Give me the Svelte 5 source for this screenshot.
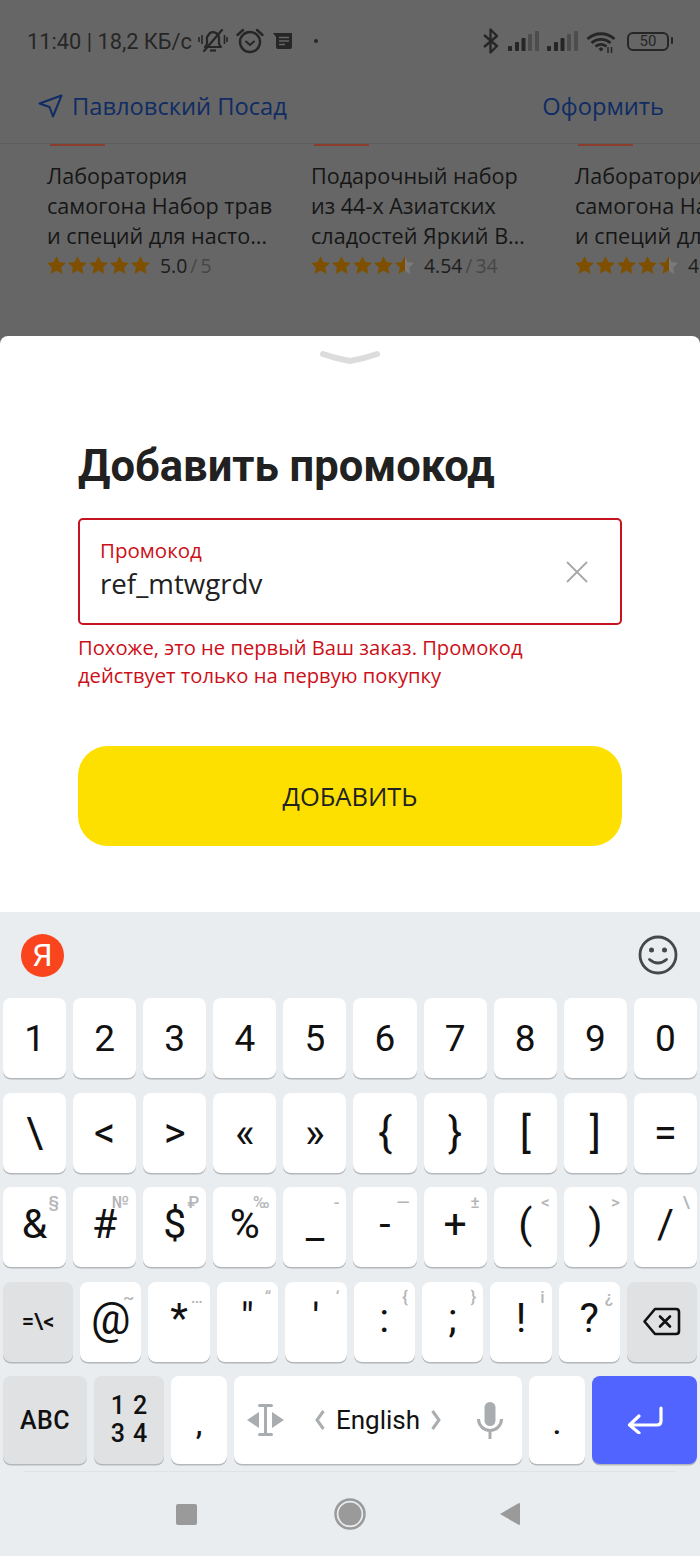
<script lang="ts">
  const cards = [
    { lines: 'Лаборатория самогона Набор трав и специй для насто…', rating: 5, score: '5.0', count: '5' },
    { lines: 'Подарочный набор из 44-х Азиатских сладостей Яркий В…', rating: 4.54, score: '4.54', count: '34' },
    { lines: 'Лаборатория самогона Набор трав и специй для насто…', rating: 4.54, score: '4.54', count: '34' }
  ];

  const starPath = 'M9.5 0.2l2.9 5.9 6.500.8-4.800 4.500 1.400 6.500-6-3.300-6 3.300 1.400-6.500L.1 6.900l6.500-.8z';

  const starFill = (rating: number, i: number) => Math.max(0, Math.min(1, rating - i)) * 100;

  const numberRow = ['1', '2', '3', '4', '5', '6', '7', '8', '9', '0'];
  const bracketRow = ['\\', '<', '>', '«', '»', '{', '}', '[', ']', '='];
  const symbolRow = [
    ['&', '§'], ['#', '№'], ['$', '₽'], ['%', '‰'], ['_', '-'],
    ['-', '—'], ['+', '±'], ['(', '<'], [')', '>'], ['/', '\\']
  ];
  const punctRow = [
    ['@', '~'], ['*', '…'], ['"', '“'], ["'", '‘'], [':', '{'], [';', '}'], ['!', 'i'], ['?', '¿']
  ];
</script>

<div class="page">
  <div class="backdrop">
    <div class="status">
      <span class="clock">11:40 | 18,2 КБ/с</span>
      <svg class="ic-bell" width="30" height="26" viewBox="0 0 30 26" fill="none" stroke="#262626">
        <path d="M7 19h16l-2-3v-6a6 6 0 0 0-9-5L9 9v7z" stroke-width="2.2" stroke-linejoin="round" />
        <path d="M12 22.5h6" stroke-width="2.2" />
        <path d="M6 23L24 2" stroke-width="2.2" stroke-linecap="round" />
        <path d="M1 9v5M4 7v9M26.500 7v9M29 9v5" stroke-width="1.6" />
      </svg>
      <svg class="ic-alarm" width="28" height="28" viewBox="0 0 28 28" fill="none" stroke="#262626" stroke-width="2.4">
        <circle cx="14" cy="15" r="10" />
        <path d="M1.500 8L7 3M26.500 8L21 3" stroke-linecap="round" />
        <path d="M10 14.500l4 3.500 4-3.500" stroke-linecap="round" stroke-width="2" />
      </svg>
      <svg class="ic-note" width="20" height="16" viewBox="0 0 20 16">
        <path d="M0 0h19v14q0 2-2 2H5q-2 0-2-2V4z" fill="#262626" />
        <path d="M6 4.500h10M6 8h10M6 11.500h6" stroke="#666" stroke-width="1.600" />
      </svg>
      <span class="dot"></span>
      <span class="spacer"></span>
      <svg class="ic-bt" width="16" height="26" viewBox="0 0 16 26" fill="none" stroke="#262626" stroke-width="2.300" stroke-linejoin="round">
        <path d="M1 7l13 11-6.500 6.500V1.500L14 8 1 19" />
      </svg>
      {#each [0, 1] as n (n)}
        <svg class="ic-signal" width="31" height="20" viewBox="0 0 31 20">
          <rect x="0" y="15" width="4" height="5" rx="1" fill="#262626" />
          <rect x="7" y="11" width="4" height="9" rx="1" fill="#262626" />
          <rect x="13.500" y="7" width="4" height="13" rx="1" fill="#262626" />
          <rect x="20" y="3" width="4" height="17" rx="1" fill="#4d4d4d" />
          <rect x="27" y="0" width="4" height="20" rx="1" fill="#4d4d4d" />
        </svg>
      {/each}
      <svg class="ic-wifi" width="31" height="23" viewBox="0 0 31 23" fill="none" stroke="#262626" stroke-width="2.800">
        <path d="M1.500 9a20 20 0 0 1 27 0M5.500 13a14 14 0 0 1 19 0M9.500 16.500a8 8 0 0 1 11 0" />
        <path d="M12.500 19l2.500-2 2.500 2-2.500 2.500z" fill="#262626" stroke="none" />
        <path d="M22 17v6M25.500 17v6" stroke-width="1.500" />
      </svg>
      <div class="battery"><span>50</span></div>
    </div>

    <div class="topbar">
      <svg class="ic-plane" width="25" height="24" viewBox="0 0 25 24" fill="none" stroke="#0f2c64" stroke-width="2" stroke-linejoin="round">
        <path d="M1.500 9.500L23.500 1.500 15 22.500 11.500 13z" />
      </svg>
      <span class="link">Павловский Посад</span>
      <span class="link checkout">Оформить</span>
    </div>

    <div class="cards">
      {#each cards as card, c (c)}
        <div class="card">
          <div class="accent"></div>
          <div class="title">{card.lines}</div>
          <div class="rating">
            <div class="stars">
              {#each [0, 1, 2, 3, 4] as i (i)}
                <svg width="19" height="18" viewBox="0 0 19 18">
                  <defs>
                    <linearGradient id="g{c}{i}">
                      <stop offset="{starFill(card.rating, i)}%" stop-color="#7f4f00" />
                      <stop offset="{starFill(card.rating, i)}%" stop-color="#7a7a7a" />
                    </linearGradient>
                  </defs>
                  <path d={starPath} fill="url(#g{c}{i})" />
                </svg>
              {/each}
            </div>
            <span class="score">{card.score}</span><span class="count"><i>/</i>{card.count}</span>
          </div>
        </div>
      {/each}
    </div>
  </div>

  <div class="sheet">
    <svg class="handle" width="62" height="16" viewBox="0 0 62 16" fill="none">
      <path d="M4 4Q18 9 31 11Q44 9 58 4" stroke="#dcdcdc" stroke-width="6" stroke-linecap="round" />
    </svg>
    <h1>Добавить промокод</h1>
    <div class="field">
      <div class="field-text">
        <div class="field-label">Промокод</div>
        <div class="field-value">ref_mtwgrdv</div>
      </div>
      <svg width="22" height="22" viewBox="0 0 22 22" stroke="#a8a8a8" stroke-width="1.800">
        <path d="M1 1l20 20M21 1L1 21" />
      </svg>
    </div>
    <p class="error">Похоже, это не первый Ваш заказ. Промокод<br />действует только на первую покупку</p>
    <button class="submit">ДОБАВИТЬ</button>
  </div>

  <div class="keyboard">
    <div class="toolbar">
      <div class="ya">Я</div>
      <svg width="40" height="40" viewBox="0 0 40 40" fill="none" stroke="#45484b" stroke-width="2.800">
        <circle cx="20" cy="20" r="18" />
        <path d="M11.500 24.500q8.500 7 17 0" stroke-linecap="round" />
        <circle cx="13.500" cy="15" r="2.500" fill="#45484b" stroke="none" />
        <circle cx="26.500" cy="15" r="2.500" fill="#45484b" stroke="none" />
      </svg>
    </div>

    <div class="rows">
      <div class="row">
        {#each numberRow as k (k)}<div class="key">{k}</div>{/each}
      </div>
      <div class="row">
        {#each bracketRow as k (k)}<div class="key tall">{k}</div>{/each}
      </div>
      <div class="row">
        {#each symbolRow as [k, hint] (k)}
          <div class="key raised">{k}<span class="hint">{hint}</span></div>
        {/each}
      </div>
      <div class="row">
        <div class="key fn small wide">=\&lt;</div>
        {#each punctRow as [k, hint] (k)}
          <div class="key raised" class:at={k === '@'}>{k}<span class="hint">{hint}</span></div>
        {/each}
        <div class="key fn wide">
          <svg width="38" height="29" viewBox="0 0 38 29" fill="none" stroke="#111" stroke-width="2.600" stroke-linejoin="round">
            <path d="M12 2h21q3 0 3 3v19q0 3-3 3H12L1.500 14.500z" />
            <path d="M17 9.500l10 10M27 9.500l-10 10" stroke-linecap="round" />
          </svg>
        </div>
      </div>
      <div class="row bottom">
        <div class="key fn abc">ABC</div>
        <div class="key fn nums"><span>1 2</span><span>3 4</span></div>
        <div class="key punct">,</div>
        <div class="key space">
          <svg width="37" height="32" viewBox="0 0 37 32" fill="#a9adb0">
            <path d="M0 16l12-8v16zM37 16l-12-8v16z" />
            <path d="M12.500 1.500h12M18.500 1.500v29M12.500 30.500h12" stroke="#a9adb0" stroke-width="3" fill="none" stroke-linecap="round" />
          </svg>
          <div class="lang">
            <svg width="10" height="20" viewBox="0 0 10 20" fill="none" stroke="#a9adb0" stroke-width="3"><path d="M8.500 1L2 10l6.500 9" /></svg>
            <span>English</span>
            <svg width="10" height="20" viewBox="0 0 10 20" fill="none" stroke="#a9adb0" stroke-width="3"><path d="M1.500 1L8 10l-6.500 9" /></svg>
          </div>
          <svg class="mic" width="26" height="37" viewBox="0 0 26 37" fill="none" stroke="#a9adb0" stroke-width="3">
            <rect x="7.500" y="0" width="11" height="24" rx="5.500" fill="#a9adb0" stroke="none" />
            <path d="M1.500 17a11.500 11.500 0 0 0 23 0M13 28v9" />
          </svg>
        </div>
        <div class="key punct">.</div>
        <div class="key enter">
          <svg width="36" height="28" viewBox="0 0 36 28" fill="none" stroke="#fff" stroke-width="3.200" stroke-linecap="round" stroke-linejoin="round">
            <path d="M34 2v13q0 4-4 4H3M12 10l-9.500 9 9.500 8" />
          </svg>
        </div>
      </div>
    </div>

    <div class="divider"></div>

    <div class="navbar">
      <span class="nav-square"></span>
      <svg width="32" height="32" viewBox="0 0 32 32">
        <circle cx="16" cy="16" r="14.500" fill="none" stroke="#9a9a9a" stroke-width="2.500" />
        <circle cx="16" cy="16" r="11.500" fill="#9a9a9a" />
      </svg>
      <svg width="22" height="24" viewBox="0 0 22 24">
        <path d="M1 12L20 1q1 0 1 1v20q0 1-1 1z" fill="#9a9a9a" />
      </svg>
    </div>
  </div>
</div>

<style>
  :global(body) {
    margin: 0;
    background: #fff;
  }
  .page {
    width: 700px;
    height: 1556px;
    overflow: hidden;
    display: flex;
    flex-direction: column;
    background: #666;
    font-family: 'Open Sans', sans-serif;
  }

  /* dimmed page behind the sheet */
  .backdrop {
    height: 336px;
    flex-shrink: 0;
    overflow: hidden;
    background: #666;
  }
  .status {
    height: 82px;
    display: flex;
    align-items: center;
    padding: 0 31px 0 27px;
    color: #262626;
    font-family: Roboto, sans-serif;
    font-size: 21.8px;
    box-sizing: border-box;
  }
  .ic-bell { margin-left: 6px; }
  .ic-alarm { margin-left: 8px; }
  .ic-note { margin-left: 9px; }
  .dot {
    width: 4px;
    height: 4px;
    border-radius: 50%;
    background: #262626;
    margin-left: 21px;
  }
  .spacer { flex: 1; }
  .ic-signal { margin-left: 8px; }
  .ic-bt + .ic-signal { margin-left: 9px; }
  .ic-wifi { margin-left: 8px; }
  .battery {
    position: relative;
    width: 42px;
    height: 19px;
    margin-left: 10px;
    border: 2.5px solid #262626;
    border-radius: 6px;
    box-sizing: border-box;
    display: flex;
    align-items: center;
    justify-content: center;
    font-size: 15px;
    line-height: 1;
  }
  .battery::after {
    content: '';
    position: absolute;
    right: -6px;
    top: 3.5px;
    width: 2.5px;
    height: 7px;
    background: #262626;
    border-radius: 1px;
  }
  .topbar {
    height: 62px;
    display: flex;
    align-items: center;
    padding: 0 36px 14px 38px;
    box-sizing: border-box;
    border-bottom: 1px solid #5e5e5e;
  }
  .link {
    color: #0f2c64;
    font-size: 23.7px;
    margin-left: 9px;
  }
  .checkout { margin-left: auto; }
  .cards {
    display: flex;
    gap: 32px;
    padding-left: 47px;
  }
  .card {
    width: 232px;
    flex-shrink: 0;
  }
  .accent {
    width: 55px;
    height: 2px;
    margin-left: 3px;
    background: #8a3d2c;
  }
  .title {
    margin-top: 15px;
    color: #161616;
    font-size: 21.6px;
    line-height: 30px;
  }
  .rating {
    display: flex;
    align-items: center;
    height: 30px;
    margin-top: -1px;
    font-size: 19.4px;
    color: #1c1c1c;
  }
  .stars {
    display: flex;
    gap: 2px;
    margin-right: 10px;
  }
  .stars svg { display: block; }
  .count { color: #464646; }
  .count i {
    font-style: normal;
    margin: 0 3px;
  }

  /* promo code sheet */
  .sheet {
    height: 576px;
    flex-shrink: 0;
    box-sizing: border-box;
    padding: 14px 78px 0;
    background: #fff;
    border-radius: 8px 8px 0 0;
    display: flex;
    flex-direction: column;
  }
  .handle {
    align-self: center;
    flex-shrink: 0;
  }
  h1 {
    margin: 75px 0 0;
    height: 52px;
    font-family: Roboto, sans-serif;
    font-size: 43.5px;
    line-height: 52px;
    font-weight: 700;
    color: #212121;
  }
  .field {
    margin-top: 25px;
    height: 107px;
    box-sizing: border-box;
    border: 2px solid #c5141f;
    border-radius: 5px;
    padding: 0 32px 0 20px;
    display: flex;
    align-items: center;
    justify-content: space-between;
  }
  .field-text { margin-bottom: 6px; }
  .field-label {
    color: #cc0f18;
    font-size: 20.5px;
    line-height: 26px;
  }
  .field-value {
    color: #212121;
    font-size: 27.7px;
    line-height: 36px;
    margin-top: 2px;
  }
  .error {
    margin: 8px 0 0;
    color: #cc0f18;
    font-size: 20.2px;
    line-height: 28px;
  }
  .submit {
    margin-top: 57px;
    height: 100px;
    border: none;
    border-radius: 30px;
    background: #fde000;
    color: #222;
    font-family: inherit;
    font-size: 25.5px;
    font-weight: 500;
  }

  /* keyboard */
  .keyboard {
    flex: 1;
    display: flex;
    flex-direction: column;
    background: #e9edf0;
    font-family: Roboto, sans-serif;
  }
  .toolbar {
    height: 86px;
    flex-shrink: 0;
    display: flex;
    align-items: center;
    justify-content: space-between;
    padding: 0 22px 0 21px;
    box-sizing: border-box;
  }
  .ya {
    width: 43px;
    height: 43px;
    border-radius: 50%;
    background: #f9441e;
    color: #fff;
    font-size: 32px;
    font-weight: 400;
    display: flex;
    align-items: center;
    justify-content: center;
  }
  .rows {
    display: flex;
    flex-direction: column;
    gap: 14.5px;
    padding: 0 3px;
  }
  .row {
    display: flex;
    gap: 7px;
    height: 80px;
  }
  .bottom { height: 88px; }
  .key {
    position: relative;
    flex: 1 1 0;
    min-width: 0;
    display: flex;
    align-items: center;
    justify-content: center;
    background: #fff;
    border-radius: 8px;
    box-shadow: 0 1.500px 0 #b4b8bb;
    color: #111;
    font-size: 37px;
    line-height: 1;
  }
  .tall { font-size: 42px; }
  .raised { padding-bottom: 6px; box-sizing: border-box; font-size: 41px; }
  .at { font-size: 44px; }
  .hint {
    position: absolute;
    top: 7px;
    right: 7px;
    color: #b4b6b8;
    font-size: 17px;
    font-weight: 500;
  }
  .fn { background: #e0e1e3; }
  .wide { flex: 0 0 70px; }
  .small { font-size: 22px; font-weight: 500; }
  .abc { flex: 0 0 84px; font-size: 25px; font-weight: 500; letter-spacing: 0.5px; }
  .nums {
    flex: 0 0 70px;
    flex-direction: column;
    font-size: 25px;
    font-weight: 500;
    line-height: 28px;
    word-spacing: 2px;
  }
  .punct { flex: 0 0 56px; font-size: 30px; font-weight: 500; padding-top: 8px; box-sizing: border-box; }
  .space {
    flex: 0 0 288px;
    display: grid;
    grid-template-columns: 1fr auto 1fr;
    align-items: center;
    justify-content: stretch;
    padding: 0 13px;
    box-sizing: border-box;
  }
  .lang {
    display: flex;
    align-items: center;
    gap: 11px;
    font-size: 26px;
  }
  .mic {
    justify-self: end;
    margin-right: 6px;
  }
  .enter { flex: 0 0 105px; background: #5164ff; }
  .divider {
    margin: 7px 24px 0;
    height: 1px;
    flex-shrink: 0;
    background: #dfe3e6;
  }
  .navbar {
    flex: 1;
    display: flex;
    align-items: center;
    padding-left: 176px;
    gap: 133px;
  }
  .nav-square {
    width: 21px;
    height: 21px;
    margin-right: 4px;
    background: #9a9a9a;
    border-radius: 2px;
  }
</style>
